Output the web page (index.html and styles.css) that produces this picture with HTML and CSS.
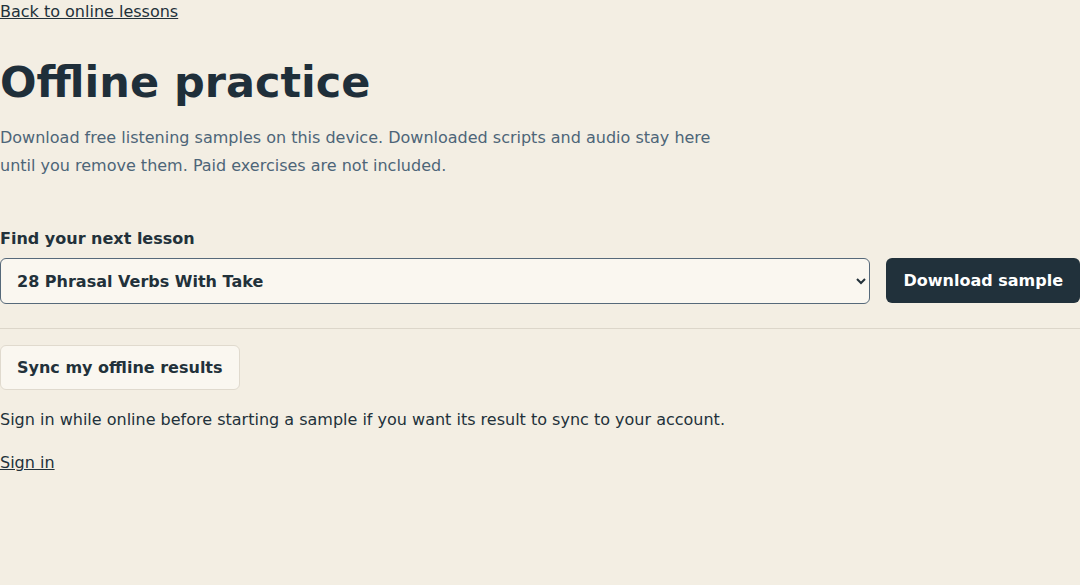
FILE: index.html
```html
<!DOCTYPE html>
<html lang="en">
<head>
<meta charset="utf-8">
<title>Offline practice</title>
<link rel="stylesheet" href="styles.css">
</head>
<body>
<main class="page">
  <a class="back" href="#">Back to online lessons</a>
  <h1 class="title">Offline practice</h1>
  <p class="intro">Download free listening samples on this device. Downloaded scripts and audio stay here until you remove them. Paid exercises are not included.</p>
  <form class="finder">
    <label class="label" for="lesson">Find your next lesson</label>
    <div class="row">
      <select id="lesson" class="select">
        <option>28 Phrasal Verbs With Take</option>
      </select>
      <button type="button" class="primary">Download sample</button>
    </div>
  </form>
  <hr class="rule">
  <button type="button" class="secondary">Sync my offline results</button>
  <p class="note">Sign in while online before starting a sample if you want its result to sync to your account.</p>
  <a class="signin" href="#">Sign in</a>
</main>
</body>
</html>
```
FILE: styles.css
```css
html, body {
  margin: 0;
  padding: 0;
  background: #f3eee3;
}
body {
  font-family: "DejaVu Sans", sans-serif;
  font-size: 16px;
  color: #22313a;
}
.page {
  display: flex;
  flex-direction: column;
  align-items: flex-start;
}
.back, .signin {
  color: #22313a;
  text-decoration: underline;
  line-height: 22px;
}
.back {
  line-height: 24px;
}
.title {
  font-size: 43px;
  font-weight: 700;
  color: #1f2f3a;
  margin: 26px 0 0;
  line-height: 64px;
}
.intro {
  margin: 10px 0 0;
  max-width: 720px;
  color: #4d6578;
  line-height: 28px;
}
.finder {
  align-self: stretch;
  margin-top: 48px;
}
.label {
  display: block;
  font-weight: 700;
  line-height: 22px;
  margin-bottom: 8px;
}
.row {
  display: flex;
  gap: 16px;
}
.select {
  flex: 1;
  height: 46px;
  padding: 0 12px;
  font-family: inherit;
  font-size: 16px;
  font-weight: 700;
  color: #22313a;
  background: #faf7f0;
  border: 1px solid #56697a;
  border-radius: 6px;
}
.primary {
  font-family: inherit;
  font-size: 16px;
  font-weight: 700;
  color: #ffffff;
  background: #21313b;
  border: none;
  border-radius: 6px;
  padding: 0 17px;
  height: 45px;
}
.rule {
  align-self: stretch;
  margin: 24px 0 16px;
  border: none;
  border-top: 1px solid #dcd6ca;
}
.secondary {
  font-family: inherit;
  font-size: 16px;
  font-weight: 700;
  color: #22313a;
  background: #faf7f0;
  border: 1px solid #e0dace;
  border-radius: 6px;
  padding: 0 16px;
  height: 45px;
}
.note {
  margin: 18px 0 0;
  line-height: 24px;
}
.signin {
  margin-top: 20px;
}
```
